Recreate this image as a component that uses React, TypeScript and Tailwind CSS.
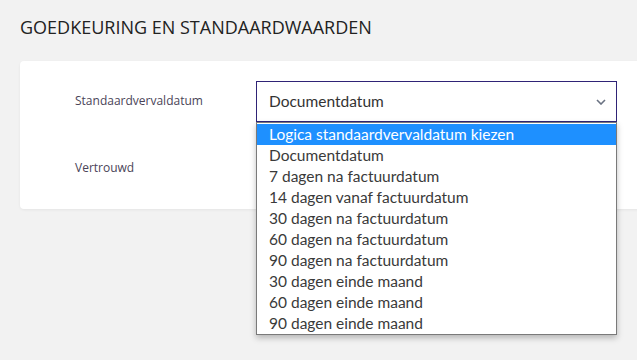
const OPTIONS = [
  'Logica standaardvervaldatum kiezen',
  'Documentdatum',
  '7 dagen na factuurdatum',
  '14 dagen vanaf factuurdatum',
  '30 dagen na factuurdatum',
  '60 dagen na factuurdatum',
  '90 dagen na factuurdatum',
  '30 dagen einde maand',
  '60 dagen einde maand',
  '90 dagen einde maand',
];

function Chevron() {
  return (
    <svg width="10" height="6" viewBox="0 0 10 6" className="text-gray-500">
      <path d="M1 1l4 4 4-4" fill="none" stroke="currentColor" strokeWidth="1.6" />
    </svg>
  );
}

export default function App() {
  return (
    <div className="min-h-[360px] w-[637px] overflow-hidden bg-[#f2f2f2] font-['Open_Sans',sans-serif]">
      <h1 className="px-5 pt-[16px] text-[18px] leading-[22px] text-[#222]">
        GOEDKEURING EN STANDAARDWAARDEN
      </h1>

      <div className="ml-5 mt-[23px] h-[148px] w-[640px] rounded-[4px] bg-white shadow-[0_1px_3px_rgba(0,0,0,0.06)]">
        <div className="flex pt-[20px]">
          <div className="w-[236px] pl-[55px] pt-[12px] text-[12px] leading-[16px] text-[#4a4458]">
            Standaardvervaldatum
          </div>
          <div className="relative w-[361px]">
            <div className="flex h-[41px] items-center justify-between border border-[#2f2376] bg-white pl-[12px] pr-[10px] font-['Lato',sans-serif] text-[15.5px] text-[#333]">
              <span>Documentdatum</span>
              <Chevron />
            </div>
            <ul className="absolute left-0 top-[41px] z-10 w-[361px] border border-[#7a7a7a] bg-white pt-[1px] font-['Lato',sans-serif] text-[15.5px] leading-[21px] text-[#3a3a3a] shadow-[0_3px_6px_rgba(0,0,0,0.25)]">
              {OPTIONS.map((o, i) => (
                <li
                  key={o}
                  className={i === 0 ? 'bg-[#1e90ff] pl-[12px] text-white' : 'pl-[12px]'}
                >
                  {o}
                </li>
              ))}
            </ul>
          </div>
        </div>
        <div className="pl-[55px] pt-[38px] text-[12px] leading-[16px] text-[#4a4458]">Vertrouwd</div>
      </div>
    </div>
  );
}
